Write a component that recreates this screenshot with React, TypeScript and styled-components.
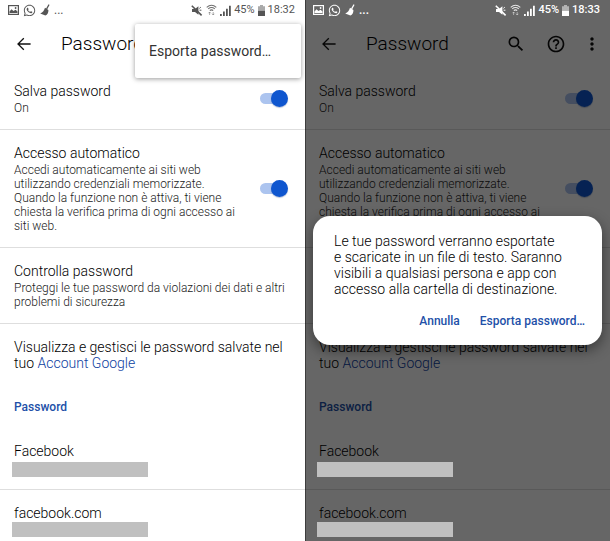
import React, { useId, useState } from "react";
import styled, { createGlobalStyle, css } from "styled-components";
import { MdHelpOutline, MdMoreVert, MdSearch } from "react-icons/md";
import { FaWhatsapp } from "react-icons/fa";

const GlobalStyle = createGlobalStyle`
  * { box-sizing: border-box; }
  body { margin: 0; background: #fff; font-family: Roboto, "Liberation Sans", sans-serif; font-weight: 300; color: #000; }
  h1, h2, p, ul { margin: 0; padding: 0; font-weight: 300; }
  button, input { font-family: inherit; margin: 0; }
`;

const Page = styled.main`
  display: grid;
  grid-template-columns: 1fr 1fr;
  height: 100vh;
  overflow: hidden;
`;

const Screen = styled.section`
  position: relative;
  isolation: isolate;
  min-width: 0;
  overflow: hidden;
  background: #fff;
`;

const StatusBar = styled.div<{ $light: boolean }>`
  position: relative;
  z-index: 2;
  display: flex;
  align-items: center;
  height: 20px;
  padding: 0 10px 0 8px;
  font-size: 11px;
  line-height: 20px;
  color: ${(p) => (p.$light ? "#fff" : "#555")};
  font-weight: ${(p) => (p.$light ? 500 : 400)};
  svg { display: block; flex: none; }
`;

const Notifications = styled.div`
  display: flex;
  align-items: center;
  gap: 4px;
  flex: 1;
`;

const Ellipsis = styled.span`
  font-size: 12px;
`;

const Indicators = styled.div`
  display: flex;
  align-items: center;
  gap: 3px;
`;

const Toolbar = styled.header`
  display: flex;
  align-items: center;
  height: 48px;
  padding: 0 12px 0 17px;
`;

const IconButton = styled.button<{ $narrow?: boolean }>`
  display: flex;
  justify-content: center;
  width: ${(p) => (p.$narrow ? "12px" : "auto")};
  padding: 0;
  border: 0;
  background: none;
  color: #111;
  svg { flex: none; }
`;

const Title = styled.h1`
  flex: 1;
  margin-left: 30px;
  font-size: 19px;
  line-height: 24px;
`;

const Actions = styled.div`
  display: flex;
  align-items: center;
  gap: 20px;
`;

const Row = styled.div<{ $last?: boolean }>`
  display: flex;
  align-items: center;
  justify-content: space-between;
  padding: 15px 17px 14px 14px;
  border-bottom: ${(p) => (p.$last ? "0" : "1px solid #dedede")};
`;

const RowText = styled.div`
  flex: 1;
`;

const RowTitle = styled.h2`
  display: block;
  font-size: 14px;
  line-height: 16px;
`;

const RowDescription = styled.p`
  margin-top: 2px;
  font-size: 12px;
  line-height: 14px;
  color: #222;
`;

const Switch = styled.input`
  appearance: none;
  position: relative;
  flex: none;
  width: 28px;
  height: 17px;
  && { margin: 0 0 2px 12px; }
  &::before {
    content: "";
    position: absolute;
    inset: 3px 2px 3px 0;
    border-radius: 6px;
    background: #acc4ef;
  }
  &::after {
    content: "";
    position: absolute;
    top: 0;
    left: 0;
    width: 17px;
    height: 17px;
    border-radius: 50%;
    background: #777;
    box-shadow: 0 1px 1px rgba(20, 60, 140, 0.3);
  }
  &:checked::after {
    left: 11px;
    background: #0f56cf;
  }
`;

const Link = styled.a`
  color: #0d419f;
  text-decoration: none;
`;

const SectionLabel = styled.h2`
  margin-top: 14px;
  padding: 0 14px;
  font-size: 12px;
  line-height: 16px;
  font-weight: 500;
  color: #2250a8;
`;

const Sites = styled.ul`
  margin-top: 13px;
  list-style: none;
`;

const Site = styled.li`
  padding: 15px 12px 12px;
  border-bottom: 1px solid #dedede;
`;

const SiteName = styled.h2`
  padding-left: 2px;
  font-size: 14px;
  line-height: 16px;
`;

const Redacted = styled.div<{ $tight?: boolean }>`
  position: relative;
  z-index: 2;
  width: 136px;
  height: 15px;
  margin-top: ${(p) => (p.$tight ? 1 : 3)}px;
  background: #c0c0c0;
`;

const Menu = styled.div`
  position: absolute;
  z-index: 3;
  top: 24px;
  right: 4px;
  width: 166px;
  border-radius: 2px;
  background: #fff;
  box-shadow: 0 1px 5px rgba(0, 0, 0, 0.4);
`;

const MenuItem = styled.button`
  width: 100%;
  padding: 19px 14px;
  border: 0;
  background: none;
  text-align: left;
  font-size: 14px;
  line-height: 16px;
  font-weight: 400;
  color: #333;
`;

const scrimLayer = css`
  position: absolute;
  inset: 0;
`;

const Scrim = styled.div`
  ${scrimLayer}
  z-index: 1;
  background: rgba(0, 0, 0, 0.6);
  border-left: 1px solid rgba(0, 0, 0, 0.4);
`;

const DialogLayer = styled.div`
  ${scrimLayer}
  z-index: 3;
  display: flex;
  align-items: center;
  padding: 20px 8px 0;
`;

const Dialog = styled.div`
  width: 100%;
  padding: 17px 17px 16px 21px;
  border-radius: 17px;
  background: #fff;
  box-shadow: 0 5px 14px rgba(0, 0, 0, 0.45);
`;

const DialogText = styled.p`
  font-size: 14px;
  line-height: 16px;
`;

const DialogActions = styled.div`
  display: flex;
  justify-content: flex-end;
  gap: 20px;
  margin-top: 16px;
`;

const DialogButton = styled.button`
  padding: 0;
  border: 0;
  background: none;
  font-size: 12px;
  line-height: 16px;
  font-weight: 500;
  color: #2250a8;
`;

const ImageIcon = () => (
  <svg width="11" height="10" viewBox="0 0 11 10">
    <rect x="0.6" y="0.6" width="9.8" height="8.8" fill="none" stroke="currentColor" strokeWidth="1.2" />
    <path d="M1.5 8V6.4L3.6 4.2 5.4 6 7.6 4.8 9.5 6.6V8Z" fill="currentColor" />
    <circle cx="7.6" cy="3" r="0.9" fill="currentColor" />
  </svg>
);

const BroomIcon = () => (
  <svg width="10" height="12" viewBox="0 0 10 12">
    <path d="M8.8 1 6.8 4.6" stroke="currentColor" strokeWidth="1.3" strokeLinecap="round" />
    <path d="M5 3.8 8.4 6C8.6 8.6 7.4 10.8 5.4 11.6L0.2 9.6C3 8.4 4.2 6.4 5 3.8Z" fill="currentColor" />
  </svg>
);

const MutedIcon = () => (
  <svg width="12" height="11" viewBox="0 0 12 11">
    <path d="M1 4H4L7.4 1.2V9.8L4 7H1Z" fill="currentColor" />
    <path d="M0.8 0.8 10.6 10.4" stroke="currentColor" strokeWidth="1.6" />
    <path d="M8.6 5.2H10.4M8.4 3.4 9.8 2.2" fill="none" stroke="currentColor" strokeWidth="1" />
  </svg>
);

const WifiIcon = () => (
  <svg width="11" height="12" viewBox="0 0 11 12">
    <g fill="none" stroke="currentColor" strokeWidth="1.1" opacity="0.85">
      <path d="M0.7 3.3Q5.5 -0.9 10.3 3.3" />
      <path d="M2.2 4.9Q5.5 2.2 8.8 4.9" />
      <path d="M3.8 6.5Q5.5 5.2 7.2 6.5" />
      <path d="M3.6 8V11M2.5 9.2 3.6 8 4.7 9.2M7.2 8V11M6.1 9.8 7.2 11 8.3 9.8" strokeWidth="0.8" opacity="0.7" />
    </g>
  </svg>
);

const SignalIcon = () => (
  <svg width="11" height="11" viewBox="0 0 11 11" fill="currentColor">
    <path d="M0 9H1.8V11H0ZM3 6.6H4.8V11H3ZM6 3.8H7.8V11H6ZM9 0.8H10.8V11H9Z" />
  </svg>
);

const BatteryIcon = () => (
  <svg width="7" height="11" viewBox="0 0 7 11" fill="currentColor">
    <path d="M2 0H5V1.2H7V5.6H0V1.2H2Z" opacity="0.5" />
    <path d="M0 5.6H7V11H0Z" />
  </svg>
);

const BackIcon = () => (
  <svg width="14" height="14" viewBox="0 0 14 14" fill="none" stroke="currentColor" strokeWidth="1.3">
    <path d="M13.6 7H1.2M6.8 1.2 1 7 6.8 12.8" />
  </svg>
);

const EXPORT = "Esporta password…";

function SwitchRow({ title, children }: { title: string; children: React.ReactNode }) {
  const id = useId();
  const [on, setOn] = useState(true);
  return (
    <Row>
      <RowText>
        <RowTitle as="label" htmlFor={id}>{title}</RowTitle>
        <RowDescription>{children}</RowDescription>
      </RowText>
      <Switch id={id} type="checkbox" role="switch" checked={on} onChange={() => setOn(!on)} />
    </Row>
  );
}

function PasswordScreen({ time, dimmed = false, children }: { time: string; dimmed?: boolean; children: React.ReactNode }) {
  return (
    <Screen>
      <StatusBar $light={dimmed}>
        <Notifications>
          <ImageIcon />
          <FaWhatsapp size={13} />
          <BroomIcon />
          <Ellipsis>...</Ellipsis>
        </Notifications>
        <Indicators>
          <MutedIcon />
          <WifiIcon />
          <SignalIcon />
          <span>45%</span>
          <BatteryIcon />
          <span>{time}</span>
        </Indicators>
      </StatusBar>
      <Toolbar>
        <IconButton aria-label="Indietro"><BackIcon /></IconButton>
        <Title>Password</Title>
        <Actions>
          <IconButton aria-label="Cerca"><MdSearch size={20} /></IconButton>
          <IconButton aria-label="Guida"><MdHelpOutline size={20} /></IconButton>
          <IconButton $narrow aria-label="Altre opzioni"><MdMoreVert size={20} /></IconButton>
        </Actions>
      </Toolbar>
      <SwitchRow title="Salva password">On</SwitchRow>
      <SwitchRow title="Accesso automatico">
        Accedi automaticamente ai siti web utilizzando credenziali memorizzate. Quando la funzione non è
        attiva, ti viene chiesta la verifica prima di ogni accesso ai siti web.
      </SwitchRow>
      <Row>
        <RowText>
          <RowTitle>Controlla password</RowTitle>
          <RowDescription>Proteggi le tue password da violazioni dei dati e altri problemi di sicurezza</RowDescription>
        </RowText>
      </Row>
      <Row $last>
        <RowText>
          <RowTitle as="p">
            Visualizza e gestisci le password salvate nel tuo <Link href="#account">Account Google</Link>
          </RowTitle>
        </RowText>
      </Row>
      <SectionLabel>Password</SectionLabel>
      <Sites>
        <Site>
          <SiteName>Facebook</SiteName>
          <Redacted />
        </Site>
        <Site>
          <SiteName>facebook.com</SiteName>
          <Redacted $tight />
        </Site>
      </Sites>
      {children}
    </Screen>
  );
}

export default function App() {
  return (
    <>
      <GlobalStyle />
      <Page>
        <PasswordScreen time="18:32">
          <Menu role="menu">
            <MenuItem role="menuitem">{EXPORT}</MenuItem>
          </Menu>
        </PasswordScreen>
        <PasswordScreen time="18:33" dimmed>
          <Scrim />
          <DialogLayer>
            <Dialog role="dialog" aria-label={EXPORT}>
              <DialogText>
                Le tue password verranno esportate
                <br />e scaricate in un file di testo. Saranno visibili a qualsiasi persona e app con accesso
                alla cartella di destinazione.
              </DialogText>
              <DialogActions>
                <DialogButton>Annulla</DialogButton>
                <DialogButton>{EXPORT}</DialogButton>
              </DialogActions>
            </Dialog>
          </DialogLayer>
        </PasswordScreen>
      </Page>
    </>
  );
}
